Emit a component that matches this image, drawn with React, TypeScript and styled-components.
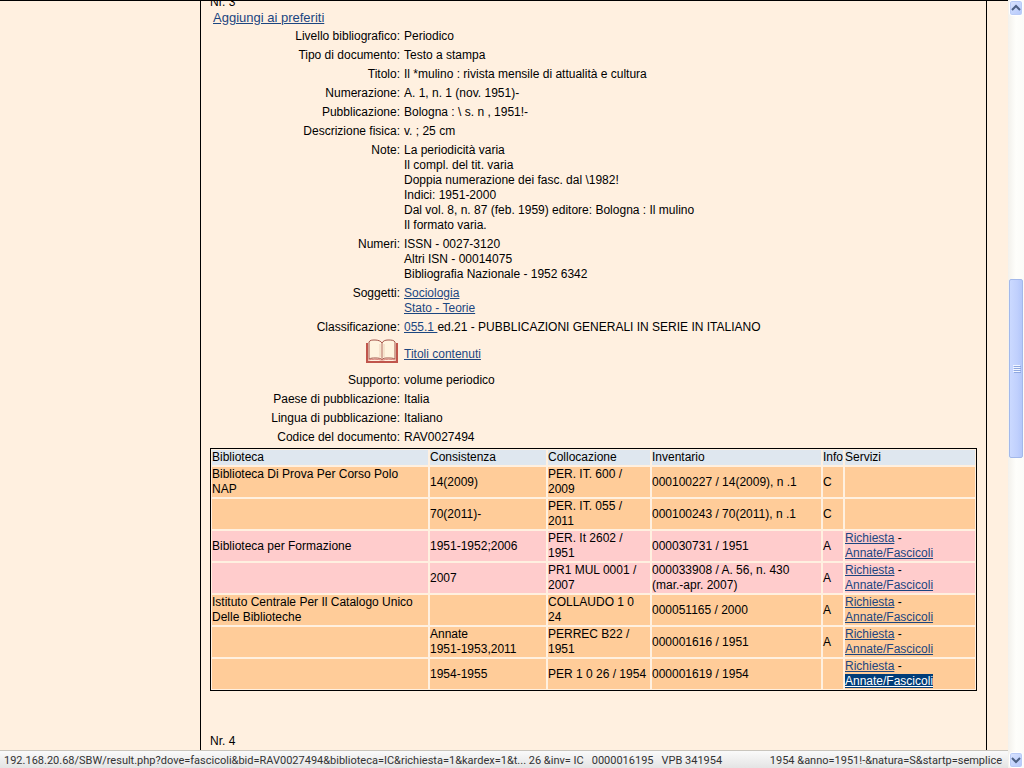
import React from 'react';
import styled, { createGlobalStyle } from 'styled-components';

const GlobalStyle = createGlobalStyle`
  * { box-sizing: border-box; }
  body {
    margin: 0;
    background: #fff0e0;
    color: #000;
    font: 12px/15px "Liberation Sans", Arial, sans-serif;
  }
`;

const Shell = styled.div`
  display: flex;
  height: 100vh;
  overflow: hidden;
`;

const Viewport = styled.div`
  flex: 1;
  min-width: 0;
  display: flex;
  flex-direction: column;
`;

const Page = styled.div`
  flex: 1;
  min-height: 0;
  overflow: hidden;
  display: grid;
  grid-template-columns: 200px minmax(0, 1fr) 21px;
  border-top: 1px solid #000;
`;

const Results = styled.main`
  grid-column: 2;
  padding: 0 9px;
  border: solid #000;
  border-width: 0 1px;
`;

const RecordNumber = styled.div<{ $scrolled?: boolean }>`
  display: flex;
  align-items: flex-end;
  height: ${(p) => (p.$scrolled ? '9px' : '58px')};
  overflow: hidden;
`;

const Link = styled.a<{ $selected?: boolean }>`
  color: ${(p) => (p.$selected ? '#fff' : '#1c4680')};
  background: ${(p) => (p.$selected ? '#003c78' : 'transparent')};
  text-decoration: underline;
`;

const Favourite = styled.div`
  padding-left: 3px;
  margin-bottom: 4px;
  font-size: 13px;
`;

const Fields = styled.dl`
  display: grid;
  grid-template-columns: 190px minmax(0, 1fr);
  gap: 4px;
  margin: 0 0 3px;
`;

const Label = styled.dt`
  text-align: right;
`;

const Value = styled.dd`
  margin: 0;
  align-self: center;
`;

const Line = styled.span`
  display: block;
`;

const BookIcon = styled.svg`
  display: inline-block;
  width: 34px;
  height: 30px;
  vertical-align: top;
`;

const Holdings = styled.table`
  width: 100%;
  table-layout: fixed;
  border-collapse: separate;
  border-spacing: 0;
  border: 1px solid #000;
`;

const Col = styled.col<{ $w?: string }>`
  width: ${(p) => p.$w ?? 'auto'};
`;

const HeadCell = styled.th`
  height: 17px;
  padding: 0;
  border: 1px solid #fff0e0;
  background: #dfe7ef;
  font-weight: normal;
  text-align: left;
  white-space: nowrap;
`;

const Row = styled.tr<{ $tone: Tone }>`
  background: ${(p) => (p.$tone === 'pink' ? '#ffcccc' : '#ffcc99')};
`;

const Cell = styled.td`
  height: 32px;
  padding: 0;
  border: 1px solid #fff0e0;
  white-space: nowrap;
`;

const StatusBar = styled.footer`
  display: flex;
  align-items: center;
  height: 18px;
  padding: 1px 6px 0 4px;
  border-top: 1px solid #c9c5bd;
  background: linear-gradient(#fafafa, #e4e4e4);
  color: #333;
  font: 11px/15px Roboto, Tahoma, sans-serif;
  white-space: nowrap;
`;

const StatusPart = styled.span<{ $last?: boolean }>`
  margin-left: ${(p) => (p.$last ? 'auto' : '0')};
  padding-right: ${(p) => (p.$last ? '0' : '8px')};
`;

const ScrollBar = styled.div`
  width: 16px;
  display: flex;
  flex-direction: column;
  background: linear-gradient(90deg, #f3f1ec, #fefefb 50%, #fbfbf8);
`;

const ScrollButton = styled.button`
  display: flex;
  align-items: center;
  justify-content: center;
  height: 16px;
  margin: 0 1px;
  padding: 0;
  border: 1px solid #fff;
  border-radius: 3px;
  background: linear-gradient(135deg, #dbe5ff, #b3c7fb);
  box-shadow: inset 0 0 0 1px #b9cbf6;
`;

const TrackGap = styled.div<{ $grow: number }>`
  flex: ${(p) => p.$grow} 1 0;
`;

const Thumb = styled.div`
  flex: 178 1 0;
  display: flex;
  flex-direction: column;
  align-items: center;
  justify-content: center;
  gap: 1px;
  margin: 0 1px;
  border: 1px solid #a3b8ea;
  border-radius: 2px;
  background: linear-gradient(90deg, #cbd9ff, #c0d0fd 60%, #b4c7fa);
`;

const Grip = styled.span`
  width: 7px;
  height: 1px;
  background: #f1f5ff;
  box-shadow: 1px 1px 0 #8fa8e0;
`;

type Tone = 'orange' | 'pink';

const fields: { label: React.ReactNode; lines: React.ReactNode[] }[] = [
  { label: 'Livello bibliografico:', lines: ['Periodico'] },
  { label: 'Tipo di documento:', lines: ['Testo a stampa'] },
  { label: 'Titolo:', lines: ['Il *mulino : rivista mensile di attualità e cultura'] },
  { label: 'Numerazione:', lines: ['A. 1, n. 1 (nov. 1951)-'] },
  { label: 'Pubblicazione:', lines: ['Bologna : \\ s. n , 1951!-'] },
  { label: 'Descrizione fisica:', lines: ['v. ; 25 cm'] },
  {
    label: 'Note:',
    lines: [
      'La periodicità varia',
      'Il compl. del tit. varia',
      'Doppia numerazione dei fasc. dal \\1982!',
      'Indici: 1951-2000',
      'Dal vol. 8, n. 87 (feb. 1959) editore: Bologna : Il mulino',
      'Il formato varia.',
    ],
  },
  {
    label: 'Numeri:',
    lines: ['ISSN - 0027-3120', 'Altri ISN - 00014075', 'Bibliografia Nazionale - 1952 6342'],
  },
  {
    label: 'Soggetti:',
    lines: [<Link href="#sociologia">Sociologia</Link>, <Link href="#stato">Stato - Teorie</Link>],
  },
  {
    label: 'Classificazione:',
    lines: [
      <>
        <Link href="#classe">055.1 </Link>ed.21 - PUBBLICAZIONI GENERALI IN SERIE IN ITALIANO
      </>,
    ],
  },
  {
    label: (
      <BookIcon viewBox="0 0 34 30" fill="none" role="img" aria-label="Titoli contenuti">
        <path d="M1 4v19h30V4" stroke="#c0554c" strokeWidth="2" />
        <path
          d="M3 20V3c1-2 3-2 6-2 3 0 6 1 7 3 1-2 3-3 6-3s6 0 7 2v17c-2-1-4-1-7-1-3 0-5 0-6 2-1-2-4-2-7-2-2 0-4 0-6 1z"
          fill="#fff4df"
          stroke="#a4564a"
        />
        <path d="M16 4v17" stroke="#b0665a" />
        <path d="M14 5v13M18 5v13" stroke="#ecd3ba" />
        <path d="M2 21c4-1 10-1 13 0h2c3-1 8-1 13 0" stroke="#d98479" />
      </BookIcon>
    ),
    lines: [<Link href="#titoli">Titoli contenuti</Link>],
  },
  { label: 'Supporto:', lines: ['volume periodico'] },
  { label: 'Paese di pubblicazione:', lines: ['Italia'] },
  { label: 'Lingua di pubblicazione:', lines: ['Italiano'] },
  { label: 'Codice del documento:', lines: ['RAV0027494'] },
];

interface Holding {
  tone: Tone;
  cells: string[][];
  info: string;
  services?: 'plain' | 'selected';
}

const holdings: Holding[] = [
  {
    tone: 'orange',
    cells: [['Biblioteca Di Prova Per Corso Polo', 'NAP'], ['14(2009)'], ['PER. IT. 600 /', '2009'], ['000100227 / 14(2009), n .1']],
    info: 'C',
  },
  {
    tone: 'orange',
    cells: [[], ['70(2011)-'], ['PER. IT. 055 /', '2011'], ['000100243 / 70(2011), n .1']],
    info: 'C',
  },
  {
    tone: 'pink',
    cells: [['Biblioteca per Formazione'], ['1951-1952;2006'], ['PER. It 2602 /', '1951'], ['000030731 / 1951']],
    info: 'A',
    services: 'plain',
  },
  {
    tone: 'pink',
    cells: [[], ['2007'], ['PR1 MUL 0001 /', '2007'], ['000033908 / A. 56, n. 430', '(mar.-apr. 2007)']],
    info: 'A',
    services: 'plain',
  },
  {
    tone: 'orange',
    cells: [['Istituto Centrale Per Il Catalogo Unico', 'Delle Biblioteche'], [], ['COLLAUDO 1 0', '24'], ['000051165 / 2000']],
    info: 'A',
    services: 'plain',
  },
  {
    tone: 'orange',
    cells: [[], ['Annate', '1951-1953,2011'], ['PERREC B22 /', '1951'], ['000001616 / 1951']],
    info: 'A',
    services: 'plain',
  },
  {
    tone: 'orange',
    cells: [[], ['1954-1955'], ['PER 1 0 26 / 1954'], ['000001619 / 1954']],
    info: '',
    services: 'selected',
  },
];

const columns = ['Biblioteca', 'Consistenza', 'Collocazione', 'Inventario', 'Info', 'Servizi'];
const widths = [undefined, '118px', '104px', '171px', '22px', '132px'];

function Lines({ items }: { items: React.ReactNode[] }) {
  return (
    <>
      {items.map((item, i) => (
        <Line key={i}>{item}</Line>
      ))}
    </>
  );
}

function Chevron({ down }: { down?: boolean }) {
  return (
    <svg width="10" height="8" viewBox="0 0 10 8" fill="none" aria-hidden="true">
      <path d={down ? 'M1 2l4 4 4-4' : 'M1 6l4-4 4 4'} stroke="#4d6185" strokeWidth="2" />
    </svg>
  );
}

export default function App() {
  return (
    <>
      <GlobalStyle />
      <Shell>
        <Viewport>
          <Page>
            <Results>
              <RecordNumber $scrolled>Nr. 3</RecordNumber>
              <Favourite>
                <Link href="#preferiti">Aggiungi ai preferiti</Link>
              </Favourite>
              <Fields>
                {fields.map((f, i) => (
                  <React.Fragment key={i}>
                    <Label>{f.label}</Label>
                    <Value>
                      <Lines items={f.lines} />
                    </Value>
                  </React.Fragment>
                ))}
              </Fields>
              <Holdings>
                <colgroup>
                  {widths.map((w, i) => (
                    <Col key={i} $w={w} />
                  ))}
                </colgroup>
                <thead>
                  <tr>
                    {columns.map((c) => (
                      <HeadCell key={c} scope="col">
                        {c}
                      </HeadCell>
                    ))}
                  </tr>
                </thead>
                <tbody>
                  {holdings.map((h, i) => (
                    <Row key={i} $tone={h.tone}>
                      {h.cells.map((lines, j) => (
                        <Cell key={j}>
                          <Lines items={lines} />
                        </Cell>
                      ))}
                      <Cell>{h.info}</Cell>
                      <Cell>
                        {h.services && (
                          <>
                            <Line>
                              <Link href="#richiesta">Richiesta</Link> -
                            </Line>
                            <Line>
                              <Link href="#annate" $selected={h.services === 'selected'}>
                                Annate/Fascicoli
                              </Link>
                            </Line>
                          </>
                        )}
                      </Cell>
                    </Row>
                  ))}
                </tbody>
              </Holdings>
              <RecordNumber>Nr. 4</RecordNumber>
            </Results>
          </Page>
          <StatusBar>
            <StatusPart>
              192.168.20.68/SBW/result.php?dove=fascicoli&amp;bid=RAV0027494&amp;biblioteca=IC&amp;richiesta=1&amp;kardex=1&amp;t... 26 &amp;inv= IC
            </StatusPart>
            <StatusPart>0000016195</StatusPart>
            <StatusPart>VPB 341954</StatusPart>
            <StatusPart $last>1954 &amp;anno=1951!-&amp;natura=S&amp;startp=semplice</StatusPart>
          </StatusBar>
        </Viewport>
        <ScrollBar>
          <ScrollButton type="button" aria-label="Scorri in alto">
            <Chevron />
          </ScrollButton>
          <TrackGap $grow={264} />
          <Thumb>
            <Grip />
            <Grip />
            <Grip />
            <Grip />
          </Thumb>
          <TrackGap $grow={295} />
          <ScrollButton type="button" aria-label="Scorri in basso">
            <Chevron down />
          </ScrollButton>
        </ScrollBar>
      </Shell>
    </>
  );
}
